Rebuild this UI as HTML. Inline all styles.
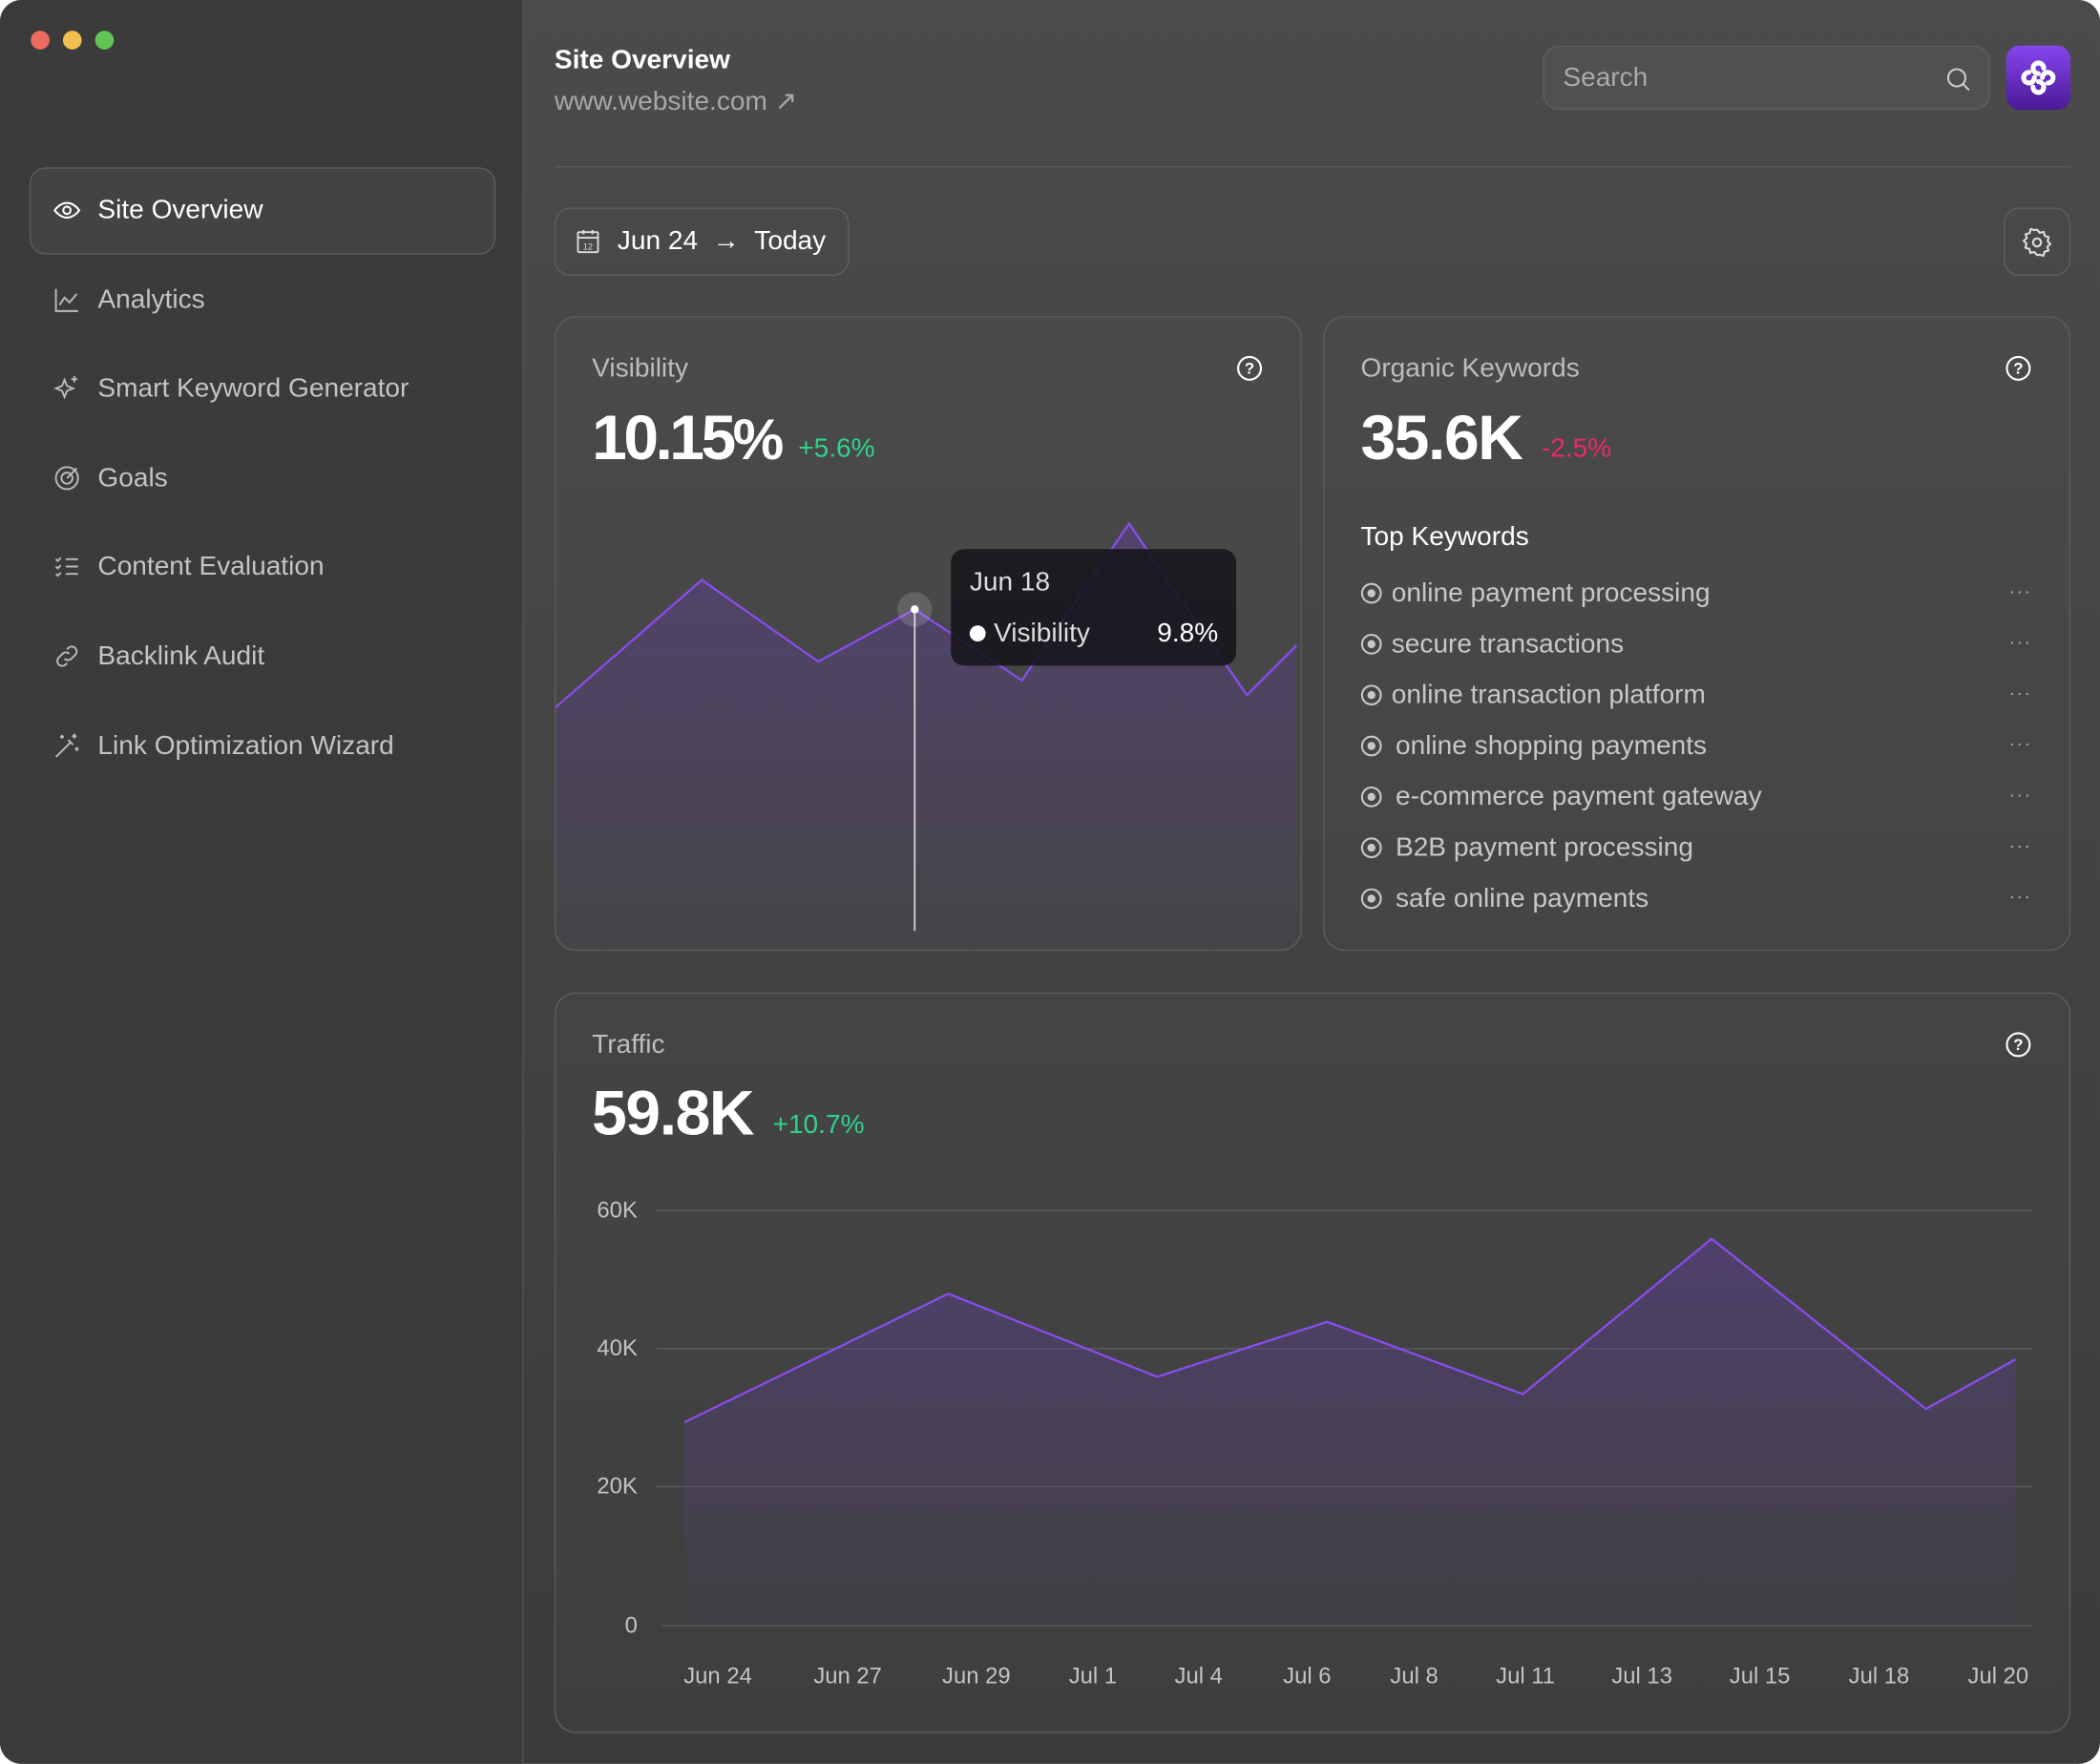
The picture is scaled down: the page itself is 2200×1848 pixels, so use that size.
<!DOCTYPE html>
<html><head><meta charset="utf-8"><style>
*{margin:0;padding:0;box-sizing:border-box}
html,body{width:2200px;height:1848px;background:#fff;overflow:hidden}
#w{position:absolute;left:0;top:0;width:1568px;height:1317px;transform:scale(1.40306);transform-origin:0 0;font-family:"Liberation Sans",sans-serif;border-radius:16px;overflow:hidden;background:linear-gradient(#4b4b4b,#3b3b3b)}
.a{position:absolute}
#side{left:0;top:0;width:391px;height:1317px;background:#3b3b3b;border-right:1px solid #545454}
.dot{width:14px;height:14px;border-radius:50%;top:23px}
.nav{left:73px;font-size:20px;color:#c4c4c4;line-height:24px}
.ic{left:39px;width:22px;height:22px}
.card{border:1px solid #5c5c5c;border-radius:16px;background:rgba(255,255,255,0.015)}
.lbl{font-size:20px;color:#bdbdbd}
.big{font-size:47px;font-weight:bold;color:#fff;letter-spacing:-1px}
.kw{left:1039px;font-size:20px;color:#c8c8c8;line-height:24px}
.kd{left:1500px;font-size:14px;color:#aaa;letter-spacing:1px}
.xl{font-size:17px;color:#c4c4c4;top:1242px;transform:translateX(-50%)}
.yl{font-size:17px;color:#c4c4c4;right:1092px}
</style></head><body><div id="w">
<div id="side" class="a"></div>
<div class="a dot" style="left:23px;background:#ec6a5e"></div>
<div class="a dot" style="left:47px;background:#f2bf4f"></div>
<div class="a dot" style="left:71px;background:#61c454"></div>

<div class="a" style="left:22px;top:125px;width:348px;height:65px;border:1px solid #5c5c5c;border-radius:12px;background:#434343"></div>
<svg class="a ic" style="top:146px" viewBox="0 0 24 24" fill="none" stroke="#fff" stroke-width="1.6"><path d="M2 12s4-6 10-6 10 6 10 6-4 6-10 6S2 12 2 12z"/><circle cx="12" cy="12" r="3"/></svg>
<div class="a nav" style="top:145px;color:#fff">Site Overview</div>
<svg class="a ic" style="top:213px" viewBox="0 0 24 24" fill="none" stroke="#bbb" stroke-width="1.5"><path d="M3 3v18h18M6 16l4-6 4 4 6-7"/></svg>
<div class="a nav" style="top:212px">Analytics</div>
<svg class="a ic" style="top:279px" viewBox="0 0 24 24" fill="none" stroke="#bbb" stroke-width="1.5"><path d="M10 5l2 5 5 2-5 2-2 5-2-5-5-2 5-2z M18 2v5M15.5 4.5h5"/></svg>
<div class="a nav" style="top:278px">Smart Keyword Generator</div>
<svg class="a ic" style="top:346px" viewBox="0 0 24 24" fill="none" stroke="#bbb" stroke-width="1.5"><circle cx="12" cy="12" r="9"/><circle cx="12" cy="12" r="4.5"/><path d="M12 12l8-8"/></svg>
<div class="a nav" style="top:345px">Goals</div>
<svg class="a ic" style="top:412px" viewBox="0 0 24 24" fill="none" stroke="#bbb" stroke-width="1.5"><path d="M3 6l1.5 1.5L7 5M3 12l1.5 1.5L7 11M3 18l1.5 1.5L7 17M11 6h10M11 12h10M11 18h10"/></svg>
<div class="a nav" style="top:411px">Content Evaluation</div>
<svg class="a ic" style="top:479px" viewBox="0 0 24 24" fill="none" stroke="#bbb" stroke-width="1.5"><path d="M10 14a4 4 0 005.6 0l3.5-3.5a4 4 0 00-5.6-5.6L12 6.4M14 10a4 4 0 00-5.6 0l-3.5 3.5a4 4 0 005.6 5.6l1.5-1.5"/></svg>
<div class="a nav" style="top:478px">Backlink Audit</div>
<svg class="a ic" style="top:546px" viewBox="0 0 24 24" fill="none" stroke="#bbb" stroke-width="1.5"><path d="M3 21L15 9M13 7l4 4M18 2v4M16 4h4M8 3v3M6.5 4.5h3M20 13v3M18.5 14.5h3"/></svg>
<div class="a nav" style="top:545px">Link Optimization Wizard</div>

<div class="a" style="left:414px;top:34px;font-size:20px;font-weight:bold;color:#fff">Site Overview</div>
<div class="a" style="left:414px;top:63px;font-size:20px;color:#a8a8a8">www.website.com ↗</div>
<div class="a" style="left:1152px;top:34px;width:334px;height:48px;border:1px solid #5e5e5e;border-radius:12px;background:#505050"></div>
<div class="a" style="left:1167px;top:47px;font-size:20px;color:#aaa">Search</div>
<svg class="a" style="left:1451px;top:48px" width="22" height="22" viewBox="0 0 24 24" fill="none" stroke="#ccc" stroke-width="1.6"><circle cx="11" cy="11" r="7"/><path d="M16 16l5 5"/></svg>
<div class="a" style="left:1498px;top:34px;width:48px;height:48px;border-radius:10px;background:linear-gradient(#8546ee,#4a1a96)"></div>
<svg class="a" style="left:1506px;top:42px" width="32" height="32" viewBox="0 0 32 32" fill="none" stroke="#fff" stroke-width="3.6" stroke-linecap="round">
<path d="M16 13a4 4 0 1 1 4-4"/><path d="M19 16a4 4 0 1 1 4 4"/><path d="M16 19a4 4 0 1 1-4 4"/><path d="M13 16a4 4 0 1 1-4-4"/></svg>
<div class="a" style="left:414px;top:124px;width:1132px;height:1px;background:#5a5a5a"></div>

<div class="a" style="left:414px;top:155px;width:220px;height:51px;border:1px solid #5e5e5e;border-radius:12px"></div>
<svg class="a" style="left:429px;top:170px" width="20" height="20" viewBox="0 0 24 24" fill="none" stroke="#ddd" stroke-width="1.6"><rect x="3" y="4" width="18" height="18" rx="1"/><path d="M3 9h18M8 2v4M16 2v4"/><text x="12" y="19.5" font-size="8" fill="#ddd" stroke="none" text-anchor="middle" font-family="Liberation Sans">12</text></svg>
<div class="a" style="left:461px;top:169px;font-size:20px;color:#fff">Jun 24 &nbsp;→ &nbsp;Today</div>
<div class="a" style="left:1496px;top:155px;width:50px;height:51px;border:1px solid #5e5e5e;border-radius:12px"></div>
<svg class="a" style="left:1509px;top:169px" width="24" height="24" viewBox="0 0 24 24" fill="none" stroke="#ddd" stroke-width="1.5"><circle cx="12" cy="12" r="3"/><path d="M12 2.5l2 2.3 3-.6.8 2.9 2.9 1-.8 2.9 2 2.2-2.2 2 .8 2.9-2.9.9-.9 2.9-2.9-.7L12 21.5l-2-2.3-3 .6-.8-2.9-2.9-1 .8-2.9-2-2.2 2.2-2-.8-2.9 2.9-.9.9-2.9 2.9.7z"/></svg>

<div class="a card" style="left:414px;top:236px;width:558px;height:474px"></div>
<div class="a card" style="left:988px;top:236px;width:558px;height:474px"></div>
<div class="a card" style="left:414px;top:741px;width:1132px;height:553px"></div>

<svg class="a" style="left:0;top:0" width="1568" height="1317">
<defs><linearGradient id="g" x1="0" y1="0" x2="0" y2="1"><stop offset="0" stop-color="#5e3c9e" stop-opacity=".45"/><stop offset="1" stop-color="#5e3c9e" stop-opacity=".03"/></linearGradient></defs>
<path d="M415 528L524 433L611 494L683 455L763 508L843 391L931 519L968 482V709H415Z" fill="url(#g)"/>
<path d="M415 528L524 433L611 494L683 455L763 508L843 391L931 519L968 482" fill="none" stroke="#8a4cf0" stroke-width="1.6"/>
<line x1="683" y1="455" x2="683" y2="695" stroke="#ddd" stroke-width="1.2"/>
<circle cx="683" cy="455" r="13" fill="#fff" fill-opacity=".15"/><circle cx="683" cy="455" r="3" fill="#fff"/>
<g stroke="#5a5a5a" stroke-width="1"><line x1="490" y1="904" x2="1518" y2="904"/><line x1="490" y1="1007" x2="1518" y2="1007"/><line x1="490" y1="1110" x2="1518" y2="1110"/><line x1="494" y1="1214" x2="1518" y2="1214"/></g>
<path d="M511 1062L708 966L864 1028L991 987L1137 1041L1278 925L1438 1052L1505 1015V1214H511Z" fill="url(#g)"/>
<path d="M511 1062L708 966L864 1028L991 987L1137 1041L1278 925L1438 1052L1505 1015" fill="none" stroke="#8a4cf0" stroke-width="1.6"/>
<g fill="none" stroke="#fff" stroke-width="1.5"><circle cx="933" cy="275" r="8.5"/><circle cx="1507" cy="275" r="8.5"/><circle cx="1507" cy="780" r="8.5"/></g>
<g fill="#fff" font-size="12" font-family="Liberation Sans" font-weight="bold" text-anchor="middle"><text x="933" y="279">?</text><text x="1507" y="279">?</text><text x="1507" y="784">?</text></g>
<g fill="none" stroke="#c8c8c8" stroke-width="1.5"><circle cx="1024" cy="443" r="7"/><circle cx="1024" cy="481" r="7"/><circle cx="1024" cy="519" r="7"/><circle cx="1024" cy="557" r="7"/><circle cx="1024" cy="595" r="7"/><circle cx="1024" cy="633" r="7"/><circle cx="1024" cy="671" r="7"/></g>
<g fill="#c8c8c8"><circle cx="1024" cy="443" r="3"/><circle cx="1024" cy="481" r="3"/><circle cx="1024" cy="519" r="3"/><circle cx="1024" cy="557" r="3"/><circle cx="1024" cy="595" r="3"/><circle cx="1024" cy="633" r="3"/><circle cx="1024" cy="671" r="3"/></g>
</svg>

<div class="a" style="left:710px;top:410px;width:213px;height:87px;border-radius:10px;background:rgba(22,20,26,0.88)"></div>
<div class="a" style="left:724px;top:424px;font-size:20px;color:#ddd">Jun 18</div>
<div class="a" style="left:724px;top:467px;width:12px;height:12px;border-radius:50%;background:#fff"></div>
<div class="a" style="left:742px;top:462px;font-size:20px;color:#ddd">Visibility</div>
<div class="a" style="left:864px;top:462px;font-size:20px;color:#fff">9.8%</div>

<div class="a lbl" style="left:442px;top:264px">Visibility</div>
<div class="a big" style="left:442px;top:299px;letter-spacing:-2.5px">10.15<span style="font-size:43px">%</span></div>
<div class="a" style="left:596px;top:324px;font-size:20px;color:#2fd38a">+5.6%</div>

<div class="a lbl" style="left:1016px;top:264px">Organic Keywords</div>
<div class="a big" style="left:1016px;top:299px">35.6K</div>
<div class="a" style="left:1151px;top:324px;font-size:20px;color:#ea2a63">-2.5%</div>
<div class="a" style="left:1016px;top:390px;font-size:20px;color:#fff">Top Keywords</div>
<div class="a kw" style="top:431px">online payment processing</div>
<div class="a kw" style="top:469px">secure transactions</div>
<div class="a kw" style="top:507px">online transaction platform</div>
<div class="a kw" style="top:545px;left:1042px">online shopping payments</div>
<div class="a kw" style="top:583px;left:1042px">e-commerce payment gateway</div>
<div class="a kw" style="top:621px;left:1042px">B2B payment processing</div>
<div class="a kw" style="top:659px;left:1042px">safe online payments</div>
<div class="a kd" style="top:433px">···</div><div class="a kd" style="top:471px">···</div><div class="a kd" style="top:509px">···</div><div class="a kd" style="top:547px">···</div><div class="a kd" style="top:585px">···</div><div class="a kd" style="top:623px">···</div><div class="a kd" style="top:661px">···</div>

<div class="a lbl" style="left:442px;top:769px">Traffic</div>
<div class="a big" style="left:442px;top:803px">59.8K</div>
<div class="a" style="left:577px;top:829px;font-size:20px;color:#2fd38a">+10.7%</div>
<div class="a yl" style="top:894px">60K</div>
<div class="a yl" style="top:997px">40K</div>
<div class="a yl" style="top:1100px">20K</div>
<div class="a yl" style="top:1204px">0</div>
<div class="a xl" style="left:536px">Jun 24</div><div class="a xl" style="left:633px">Jun 27</div><div class="a xl" style="left:729px">Jun 29</div><div class="a xl" style="left:816px">Jul 1</div><div class="a xl" style="left:895px">Jul 4</div><div class="a xl" style="left:976px">Jul 6</div><div class="a xl" style="left:1056px">Jul 8</div><div class="a xl" style="left:1139px">Jul 11</div><div class="a xl" style="left:1226px">Jul 13</div><div class="a xl" style="left:1314px">Jul 15</div><div class="a xl" style="left:1403px">Jul 18</div><div class="a xl" style="left:1492px">Jul 20</div>
</div></body></html>
